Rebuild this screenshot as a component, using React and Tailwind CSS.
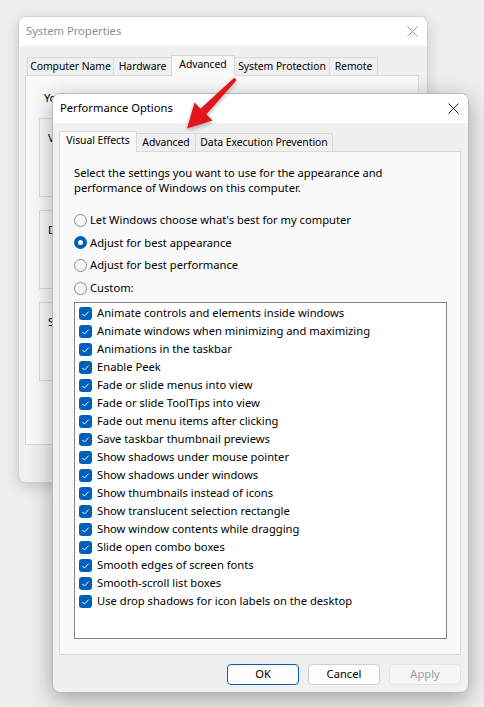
import React from 'react';

const EFFECTS = [
  'Animate controls and elements inside windows',
  'Animate windows when minimizing and maximizing',
  'Animations in the taskbar',
  'Enable Peek',
  'Fade or slide menus into view',
  'Fade or slide ToolTips into view',
  'Fade out menu items after clicking',
  'Save taskbar thumbnail previews',
  'Show shadows under mouse pointer',
  'Show shadows under windows',
  'Show thumbnails instead of icons',
  'Show translucent selection rectangle',
  'Show window contents while dragging',
  'Slide open combo boxes',
  'Smooth edges of screen fonts',
  'Smooth-scroll list boxes',
  'Use drop shadows for icon labels on the desktop',
];

const RADIOS = [
  { label: "Let Windows choose what's best for my computer", checked: false },
  { label: 'Adjust for best appearance', checked: true },
  { label: 'Adjust for best performance', checked: false },
  { label: 'Custom:', checked: false },
];

function CloseIcon({ color }) {
  return (
    <svg width="11" height="11" viewBox="0 0 11 11" className="shrink-0">
      <path d="M0.5 0.5 L10.5 10.5 M10.5 0.5 L0.5 10.5" stroke={color} strokeWidth="1" fill="none" />
    </svg>
  );
}

function Tab({ label, width, selected }) {
  return (
    <div
      className={`shrink-0 whitespace-nowrap flex items-center justify-center border border-b-0 border-[#d9d9d9] -ml-px first:ml-0 text-[10.4px] tracking-[-0.05px] ${
        selected ? 'h-[21px] bg-[#f9f9f9] relative z-10 -mb-px pb-[3px]' : 'h-[18px] bg-[#f0f0f0]'
      }`}
      style={{ width }}
    >
      {label}
    </div>
  );
}

function Radio({ checked }) {
  if (checked) {
    return (
      <span className="w-[13px] h-[13px] rounded-full bg-[#005fb8] flex items-center justify-center shrink-0">
        <span className="w-[5px] h-[5px] rounded-full bg-white" />
      </span>
    );
  }
  return <span className="w-[13px] h-[13px] rounded-full border border-[#8a8a8a] bg-[#f7f7f7] shrink-0" />;
}

function Checkbox() {
  return (
    <span className="w-[13px] h-[13px] rounded-[3px] bg-[#005fb8] flex items-center justify-center shrink-0">
      <svg width="13" height="13" viewBox="0 0 13 13">
        <path d="M3.4 6.9 L5.5 9 L9.7 4.6" stroke="white" strokeWidth="1" fill="none" />
      </svg>
    </span>
  );
}

function GroupBox({ label, text }) {
  return (
    <fieldset className="border border-[#dcdcdc] h-[86px] w-[366px] pl-[8px] pt-[4px]">
      <legend className="ml-[5px] px-[2px] text-[#23236e] leading-[15px]">{label}</legend>
      <div className="leading-[15px] whitespace-nowrap">{text}</div>
    </fieldset>
  );
}

function Button({ children, primary, disabled }) {
  return (
    <div
      className={`w-[72px] h-[21px] rounded-[4px] border flex items-center justify-center ${
        primary
          ? 'border-[#005fb8] bg-[#fdfdfd] text-black'
          : disabled
          ? 'border-[#e3e3e3] bg-[#f5f5f5] text-[#9d9d9d]'
          : 'border-[#cfcfcf] bg-[#fdfdfd] text-black'
      }`}
    >
      {children}
    </div>
  );
}

export default function App() {
  return (
    <div className="relative w-[484px] h-[707px] overflow-hidden bg-[#eeeeee] font-['Noto_Sans',sans-serif] text-[11.2px] text-black">
      {/* System Properties (background window) */}
      <div className="absolute left-[18px] top-[16px] w-[410px] h-[467px] rounded-[8px] border border-[#d2d2d2] bg-[#f0f0f0] shadow-[0_4px_14px_rgba(0,0,0,0.16)] overflow-hidden">
        <div className="h-[29px] bg-white flex items-center justify-between pl-[7px] pr-[9px]">
          <span className="text-[#8f8f8f]">System Properties</span>
          <CloseIcon color="#9a9a9a" />
        </div>
        <div className="ml-[6px] mt-[8px] w-[394px]">
          <div className="flex items-end h-[21px] pl-[2px]">
            <Tab label="Computer Name" width={87} />
            <Tab label="Hardware" width={59} />
            <Tab label="Advanced" width={64} selected />
            <Tab label="System Protection" width={96} />
            <Tab label="Remote" width={49} />
          </div>
          <div className="h-[370px] border border-[#d9d9d9] bg-[#f9f9f9] pl-[13px] pt-[14px]">
            <div className="pl-[5px] leading-[15px] whitespace-nowrap tracking-[-0.3px]">
              You must be logged on as an Administrator to make most of these changes.
            </div>
            <div className="mt-[6px] flex flex-col gap-[6px]">
              <GroupBox label="Performance" text="Visual effects, processor scheduling, memory usage, and virtual memory" />
              <GroupBox label="User Profiles" text="Desktop settings related to your sign-in" />
              <GroupBox label="Startup and Recovery" text="System startup, system failure, and debugging information" />
            </div>
          </div>
        </div>
      </div>

      {/* Performance Options (front window) */}
      <div className="absolute left-[52px] top-[93px] w-[417px] h-[600px] rounded-[8px] border border-[#b9b9b9] bg-[#f0f0f0] shadow-[0_6px_22px_rgba(0,0,0,0.32)] overflow-hidden flex flex-col">
        <div className="h-[29px] bg-white flex items-center justify-between pl-[7px] pr-[9px] shrink-0">
          <span>Performance Options</span>
          <CloseIcon color="#1a1a1a" />
        </div>
        <div className="ml-[6px] mr-[7px] mt-[7px]">
          <div className="flex items-end h-[21px]">
            <Tab label="Visual Effects" width={78} selected />
            <Tab label="Advanced" width={60} />
            <Tab label="Data Execution Prevention" width={138} />
          </div>
          <div className="h-[504px] border border-[#d9d9d9] bg-[#f9f9f9] pl-[14px] pt-[13px]">
            <p className="leading-[15px]">
              Select the settings you want to use for the appearance and
              <br />
              performance of Windows on this computer.
            </p>
            <div className="mt-[14px]">
              {RADIOS.map((r) => (
                <div key={r.label} className="h-[22.67px] flex items-center gap-[3px]">
                  <Radio checked={r.checked} />
                  <span>{r.label}</span>
                </div>
              ))}
            </div>
            <div className="mt-[2px] w-[373px] h-[337px] border border-[#868686] bg-white pl-[4px] pt-[2px]">
              {EFFECTS.map((e) => (
                <div key={e} className="h-[18px] flex items-center gap-[5px] whitespace-nowrap">
                  <Checkbox />
                  <span>{e}</span>
                </div>
              ))}
            </div>
          </div>
        </div>
        <div className="mt-[9px] pr-[7px] flex justify-end gap-[9px]">
          <Button primary>OK</Button>
          <Button>Cancel</Button>
          <Button disabled>Apply</Button>
        </div>
      </div>

      {/* red pointer arrow */}
      <svg
        className="absolute left-[175px] top-[70px] drop-shadow-[0_2px_2px_rgba(0,0,0,0.3)]"
        width="70"
        height="65"
        viewBox="0 0 70 65"
      >
        <polygon points="59.3,7.8 61.6,10.1 31.2,44.6 25.4,38.8" fill="#e2141c" />
        <polygon points="12,58.5 19.5,32.5 37.5,50.5" fill="#e2141c" />
      </svg>
    </div>
  );
}
